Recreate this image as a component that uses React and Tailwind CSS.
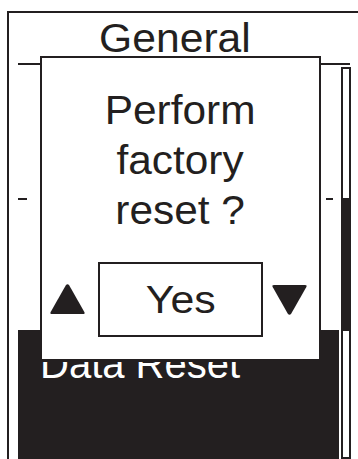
import React from 'react';

const ink = 'bg-[#231f20]';

const Triangle = ({ down }) => (
  <svg width="37" height="33" viewBox="0 0 37 33" className="shrink-0">
    <path
      d={down
        ? 'M3 2 L34 2 Q36.5 2 35.2 4.3 L20.3 30.5 Q18.5 33 16.7 30.5 L1.8 4.3 Q0.5 2 3 2 Z'
        : 'M3 31 L34 31 Q36.5 31 35.2 28.7 L20.3 2.5 Q18.5 0 16.7 2.5 L1.8 28.7 Q0.5 31 3 31 Z'}
      fill="#231f20"
    />
  </svg>
);

const App = () => {
  return (
    <div className="relative w-[358px] h-[459px] overflow-hidden bg-white font-['Liberation_Sans',Arial,sans-serif] text-[#231f20]">
      {/* device frame */}
      <div className="ml-[7px] mt-[11px] h-[448px] border-l-2 border-t-2 border-[#231f20] flex flex-col">
        {/* header */}
        <div className="h-[50px] w-[314px] ml-[9px] pt-[5px] flex justify-center">
          <span className="inline-block scale-x-[1.04] text-[41px] leading-[41px]">General</span>
        </div>
        <div className={`ml-[9px] w-[332px] h-[2px] ${ink}`} />

        <div className="mt-[2px] flex flex-1 min-h-0">
          {/* list */}
          <div className="ml-[9px] w-[321px] flex flex-col">
            <div className="h-[131px]" />
            <div className="h-[2px] flex justify-between">
              <div className={`w-[9px] h-[2px] ${ink}`} />
              <div className={`w-[7px] h-[2px] mr-[6px] ${ink}`} />
            </div>
            <div className="h-[130px]" />
            <div className={`flex-1 ${ink} pl-[22px] pt-[14px]`}>
              <span className="text-white text-[40px] leading-[40px]">Data Reset</span>
            </div>
          </div>

          {/* scrollbar */}
          <div className="ml-[2px] w-[10px] flex flex-col">
            <div className="h-[131px] border-2 border-b-0 border-[#231f20]" />
            <div className={`h-[133px] ${ink}`} />
            <div className="flex-1 border-2 border-t-0 border-[#231f20]" />
          </div>
        </div>
      </div>

      {/* confirm dialog */}
      <div className="absolute left-[40px] top-[56px] w-[281px] h-[306px] bg-white border-2 border-b-[3px] border-[#231f20] flex flex-col items-center">
        <div className="pt-[27px] flex flex-col items-center text-[40px] leading-[50px]">
          <span className="inline-block scale-x-[1.06]">Perform</span>
          <span className="inline-block scale-x-[1.06]">factory</span>
          <span className="inline-block scale-x-[1.06]">reset ?</span>
        </div>
        <div className="mt-[27px] w-full flex items-center">
          <div className="ml-[7px]">
            <Triangle />
          </div>
          <div className="ml-[12px] w-[165px] h-[75px] border-2 border-[#231f20] flex items-center justify-center">
            <span className="inline-block scale-x-[1.1] text-[39px] leading-[39px]">Yes</span>
          </div>
          <div className="ml-[8px]">
            <Triangle down />
          </div>
        </div>
      </div>
    </div>
  );
};

export default App;
